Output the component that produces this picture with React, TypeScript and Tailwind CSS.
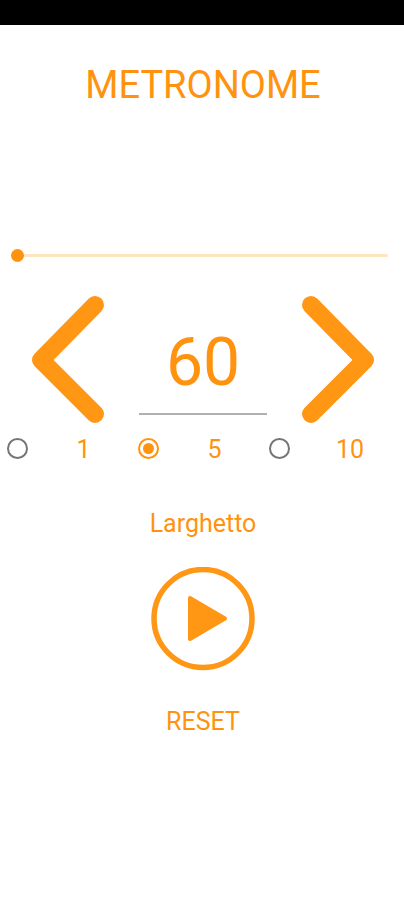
import React, { useState } from 'react';

const STEPS = [1, 5, 10];

const tempoName = (bpm: number) => {
  if (bpm < 40) return 'Grave';
  if (bpm < 60) return 'Largo';
  if (bpm < 66) return 'Larghetto';
  if (bpm < 76) return 'Adagio';
  if (bpm < 108) return 'Andante';
  if (bpm < 120) return 'Moderato';
  if (bpm < 168) return 'Allegro';
  return 'Presto';
};

const ArrowButton = ({
  label,
  points,
  onClick
}: {
  label: string,
  points: string,
  onClick: () => void
}) => (
  <button aria-label={label} onClick={onClick} className="shrink-0">
    <svg width="72" height="128" viewBox="0 0 72 128" fill="none" className="block">
      <polyline
        points={points}
        stroke="#ff9614"
        strokeWidth="18"
        strokeLinecap="round"
        strokeLinejoin="round"
      />
    </svg>
  </button>
);

export default function App() {
  const [bpm, setBpm] = useState(60);
  const [step, setStep] = useState(5);
  const [beat, setBeat] = useState(0);
  const [playing, setPlaying] = useState(false);

  const reset = () => {
    setBpm(60);
    setStep(5);
    setBeat(0);
    setPlaying(false);
  };

  return (
    <div className="min-h-screen bg-white font-['Roboto',sans-serif] text-[#ff930f]">
      <div className="h-[25px] bg-black" />

      <main className="flex flex-col pl-0.5">
        <h1 className="mt-9 text-center text-[38px] leading-12">METRONOME</h1>

        <input
          type="range"
          aria-label="Beat"
          min={0}
          max={100}
          value={beat}
          onChange={(e) => setBeat(Number(e.target.value))}
          className="
            mr-4 ml-[9px] mt-[134px] h-6 appearance-none bg-transparent
            [&::-webkit-slider-runnable-track]:h-[3px] [&::-webkit-slider-runnable-track]:rounded-full [&::-webkit-slider-runnable-track]:bg-[#ffe4bf]
            [&::-webkit-slider-thumb]:-mt-[5px] [&::-webkit-slider-thumb]:size-[13px] [&::-webkit-slider-thumb]:appearance-none
            [&::-webkit-slider-thumb]:rounded-full [&::-webkit-slider-thumb]:bg-[#ff930f]
          "
        />

        <div className="mt-7 flex items-center justify-between px-[30px]">
          <ArrowButton label="Slower" points="63,10 9,65 63,119" onClick={() => setBpm(bpm - step)} />
          <input
            type="text"
            inputMode="numeric"
            aria-label="Beats per minute"
            value={bpm}
            onChange={(e) => setBpm(Number(e.target.value) || 0)}
            className="h-28 w-32 border-b-2 border-[#b0b0b0] pt-2 text-center text-[66px] outline-none"
          />
          <ArrowButton label="Faster" points="9,10 63,65 9,119" onClick={() => setBpm(bpm + step)} />
        </div>

        <div role="radiogroup" aria-label="Step" className="mt-1.5 grid grid-cols-[131fr_131fr_140fr]">
          {STEPS.map((value) => (
            <label key={value} className="flex items-center pl-[5px] text-[25px] leading-[34px]">
              <input
                type="radio"
                name="step"
                checked={step === value}
                onChange={() => setStep(value)}
                className="
                  grid size-[21px] shrink-0 appearance-none place-items-center rounded-full border-2 border-[#757575]
                  checked:border-[#ff930f] checked:before:size-[11px] checked:before:rounded-full checked:before:bg-[#ff930f]
                "
              />
              <span className="ml-1.5 flex-1 pt-1 text-center">{value}</span>
            </label>
          ))}
        </div>

        <p className="mt-10 text-center text-[25px] leading-[34px]">{tempoName(bpm)}</p>

        <button
          aria-label={playing ? 'Pause' : 'Play'}
          onClick={() => setPlaying(!playing)}
          className="mt-[26px] self-center"
        >
          <svg width="104" height="104" viewBox="0 0 104 104" className="block">
            <circle cx="52" cy="51.500" r="49" fill="none" stroke="#ff9614" strokeWidth="5.500" />
            {playing ? (
              <path d="M36 32h11v40H36zM57 32h11v40H57z" fill="#ff9614" />
            ) : (
              <path
                d="M39 31 L74 51.500 L39 72 Z"
                fill="#ff9614"
                stroke="#ff9614"
                strokeWidth="4"
                strokeLinejoin="round"
              />
            )}
          </svg>
        </button>

        <button onClick={reset} className="mt-[34px] self-center text-[25px] leading-[34px]">
          RESET
        </button>
      </main>
    </div>
  );
}
